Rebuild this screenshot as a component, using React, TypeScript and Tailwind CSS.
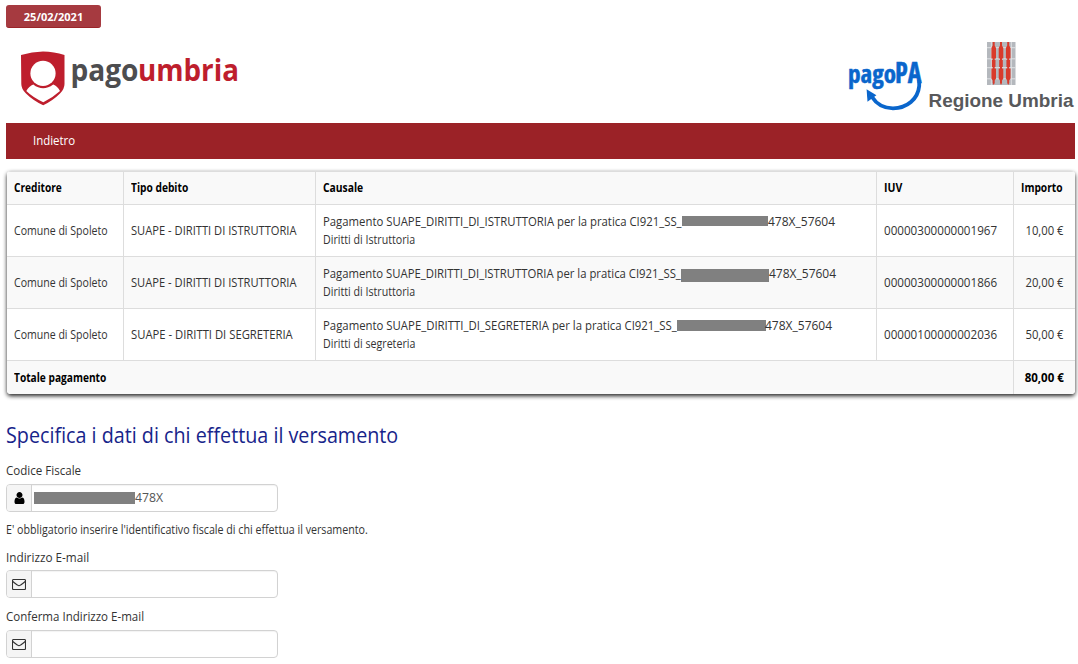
import type { ReactNode } from "react";

type Row = {
  tipo: string;
  tipoClass: string;
  prefix: string;
  prefixClass: string;
  prefixScale: string;
  barClass: string;
  suffixClass: string;
  detail: string;
  iuv: string;
  importo: string;
};

const rows: Row[] = [
  {
    tipo: "SUAPE - DIRITTI DI ISTRUTTORIA",
    tipoClass: "scale-x-[0.929]",
    prefix: "Pagamento SUAPE_DIRITTI_DI_ISTRUTTORIA per la pratica CI921_SS_",
    prefixClass: "w-[359px]",
    prefixScale: "scale-x-[0.945]",
    barClass: "mt-[3px] h-[10px] w-[86px]",
    suffixClass: "",
    detail: "Diritti di Istruttoria",
    iuv: "00000300000001967",
    importo: "10,00 €",
  },
  {
    tipo: "SUAPE - DIRITTI DI ISTRUTTORIA",
    tipoClass: "scale-x-[0.929]",
    prefix: "Pagamento SUAPE_DIRITTI_DI_ISTRUTTORIA per la pratica CI921_SS_",
    prefixClass: "w-[358px]",
    prefixScale: "scale-x-[0.943]",
    barClass: "mt-[4px] h-[13px] w-[88px]",
    suffixClass: "",
    detail: "Diritti di Istruttoria",
    iuv: "00000300000001866",
    importo: "20,00 €",
  },
  {
    tipo: "SUAPE - DIRITTI DI SEGRETERIA",
    tipoClass: "scale-x-[0.939]",
    prefix: "Pagamento SUAPE_DIRITTI_DI_SEGRETERIA per la pratica CI921_SS_",
    prefixClass: "w-[354px]",
    prefixScale: "scale-x-[0.947]",
    barClass: "mt-[3px] h-[11px] w-[89px]",
    suffixClass: "-ml-px",
    detail: "Diritti di segreteria",
    iuv: "00000100000002036",
    importo: "50,00 €",
  },
];

/* Text set narrower than the face's own width; `className` carries the horizontal scale. */
function T({ className, children }: { className: string; children: ReactNode }) {
  return <span className={`inline-block origin-left whitespace-nowrap ${className}`}>{children}</span>;
}

function PagoUmbriaLogo() {
  return (
    <svg width="224" height="70" viewBox="20 43 224 70" role="img" aria-label="pagoumbria">
      <path d="M21 55 Q32 51.5 43 51.5 Q54 51.5 64.5 55 V84 Q64.5 89 60 93.5 Q53 100.5 43.2 105.3 Q33 100.5 26 93.5 Q21.300 89 21.300 84 Z" fill="#be1e2d" />
      <path d="M33.300 84.500 Q29 86 26.300 91 Q33 97.500 43.300 102.200 Q53 97.500 60 91 Q57.500 86 53.200 84.500 Q43 92 33.300 84.500 Z" fill="#fff" />
      <circle cx="43" cy="73.400" r="12.600" fill="#fff" />
      <text x="70.500" y="80.800" fontSize="30" fontWeight="700" fill="#4d4d4f" textLength="68" lengthAdjust="spacingAndGlyphs" className="font-['Open_Sans',sans-serif]">pago</text>
      <text x="138" y="80.800" fontSize="30" fontWeight="700" fill="#be1e2d" textLength="101" lengthAdjust="spacingAndGlyphs" className="font-['Open_Sans',sans-serif]">umbria</text>
    </svg>
  );
}

function PagoPaLogo() {
  return (
    <svg width="80" height="70" viewBox="847 46 80 70" role="img" aria-label="pagoPA">
      <text x="848" y="83" fontSize="25" fontWeight="700" fill="#0a66cc" stroke="#0a66cc" strokeWidth="0.500" textLength="48" lengthAdjust="spacingAndGlyphs" className="font-['Open_Sans',sans-serif] [font-stretch:75%]">pago</text>
      <text x="895" y="83" fontSize="28" fontWeight="700" fill="#0a66cc" stroke="#0a66cc" strokeWidth="0.500" textLength="26.500" lengthAdjust="spacingAndGlyphs" className="font-['Open_Sans',sans-serif] [font-stretch:75%]">PA</text>
      <path d="M919.200 80 V86 C918 99 907 108.300 893 108.300 C883.500 108.300 876.500 104 872 97" fill="none" stroke="#0a66cc" strokeWidth="3.800" />
      <path d="M866.600 89.300 L876.400 95.200 L867.500 101.800 Z" fill="#0a66cc" />
    </svg>
  );
}

function RegioneUmbriaLogo() {
  return (
    <svg width="148" height="74" viewBox="928 40 148 74" role="img" aria-label="Regione Umbria">
      <rect x="987" y="42" width="28.500" height="43" fill="#b4b8bd" />
      <path d="M987 47.700h28.500M987 58.800h28.500M987 67.700h28.500M987 78.800h28.500M991.300 42v43M1011.300 42v43" stroke="#e3e5e8" strokeWidth="0.900" />
      {[993.7, 1001, 1008.2].map((x) => (
        <g key={x} transform={`translate(${x} 42)`}>
          <path d="M-1 0H1V3.500L2.300 6V16.500H1V18H1.800V25H1V26.500H2.300V36.500L1 38.500V41L0 43L-1 41V38.500L-2.300 36.500V26.500H-1V25H-1.800V18H-1V16.500H-2.300V6L-1 3.500Z" fill="#d93a2b" />
        </g>
      ))}
      <text x="928.500" y="107" fontSize="18.500" fontWeight="700" fill="#58595b" textLength="145" lengthAdjust="spacingAndGlyphs" className="font-['Liberation_Sans',Arial,sans-serif]">Regione Umbria</text>
    </svg>
  );
}

function UserIcon() {
  return (
    <svg width="11" height="12" viewBox="0 128 1280 1536" fill="#000">
      <path d="M1280 1399q0 109-62.500 187t-150.500 78h-854q-88 0-150.500-78t-62.500-187q0-85 8.500-160.500t31.500-152 58.500-131 94-89 134.500-34.500q131 128 313 128t313-128q76 0 134.500 34.500t94 89 58.500 131 31.500 152 8.500 160.500zm-256-887q0 159-112.500 271.500t-271.500 112.500-271.500-112.500-112.500-271.500 112.500-271.500 271.500-112.500 271.500 112.500 112.500 271.500z" />
    </svg>
  );
}

function MailIcon() {
  return (
    <svg width="14" height="12" viewBox="0 0 14 12" fill="none" stroke="#333" strokeWidth="1.1">
      <rect x="0.500" y="1.500" width="13" height="10" rx="1" />
      <path d="M0.800 3.300 C2 4.700 4.300 6.100 5.600 7.200 Q7 8.400 8.400 7.200 C9.700 6.100 12 4.700 13.200 3.300" />
    </svg>
  );
}

function Field({ icon, children }: { icon: ReactNode; children?: ReactNode }) {
  return (
    <div className="flex h-[28px] w-[272px] overflow-hidden rounded-[4px] border border-[#d2d2d2] bg-white shadow-[inset_0_1px_1px_rgba(0,0,0,0.05)]">
      <div className="flex w-[25px] shrink-0 items-center justify-center border-r border-[#d2d2d2] bg-[#f5f5f5]">{icon}</div>
      <div className="flex flex-1 items-center pl-[2px] text-[13px] text-[#555]">{children}</div>
    </div>
  );
}

const cell = "border-t border-l border-[#ddd] py-0 pl-[7px] align-middle";
const firstCell = "border-t border-[#ddd] py-0 pl-[7px] align-middle";

export default function App() {
  return (
    <div className="flex h-[664px] w-[1078px] flex-col overflow-hidden bg-white font-['Open_Sans',sans-serif] text-[#333]">
      <header className="flex h-[123px] shrink-0 flex-col pl-[6px]">
        <div className="mt-[5px] flex h-[23px] w-[95px] shrink-0 items-center justify-center rounded-[3px] border-b border-[#9b2429] bg-[#a63a40] text-[11px] leading-none font-bold text-white">
          25/02/2021
        </div>
        <div className="flex justify-between">
          <div className="mt-[15px] ml-[14px]">
            <PagoUmbriaLogo />
          </div>
          <div className="mr-[2px] flex">
            <div className="mt-[18px] mr-px">
              <PagoPaLogo />
            </div>
            <div className="mt-[12px]">
              <RegioneUmbriaLogo />
            </div>
          </div>
        </div>
      </header>

      <nav className="ml-[6px] flex h-[36px] w-[1069px] shrink-0 items-center bg-[#9b2227] pl-[27px] text-[13px] text-white">
        <T className="scale-x-[0.88]">Indietro</T>
      </nav>

      <div className="mt-[12px] ml-[7px] h-[223px] w-[1068px] shrink-0 overflow-hidden rounded-[4px] shadow-[0_2px_4px_#222]">
        <table className="w-full table-fixed border-separate border-spacing-0 bg-white text-left text-[12px] leading-[18px]">
          <colgroup>
            <col className="w-[116px]" />
            <col className="w-[192px]" />
            <col className="w-[561px]" />
            <col className="w-[137px]" />
            <col />
          </colgroup>
          <thead className="bg-[#f9f9f9] font-bold text-black">
            <tr className="h-[33px]">
              <th className={firstCell}><T className="scale-x-[0.845]">Creditore</T></th>
              <th className={cell}><T className="scale-x-[0.85]">Tipo debito</T></th>
              <th className={cell}><T className="scale-x-[0.86]">Causale</T></th>
              <th className={cell}><T className="scale-x-[0.88]">IUV</T></th>
              <th className={cell}><T className="scale-x-[0.85]">Importo</T></th>
            </tr>
          </thead>
          <tbody>
            {rows.map((r) => (
              <tr key={r.iuv} className="h-[52px] even:bg-[#f9f9f9]">
                <td className={firstCell}><T className="scale-x-[0.88]">Comune di Spoleto</T></td>
                <td className={cell}><T className={r.tipoClass}>{r.tipo}</T></td>
                <td className={cell}>
                  <div className="flex h-[18px] whitespace-nowrap">
                    <span className={`shrink-0 ${r.prefixClass}`}>
                      <T className={r.prefixScale}>{r.prefix}</T>
                    </span>
                    <span className={`shrink-0 bg-[#808080] ${r.barClass}`} />
                    <span className={r.suffixClass}>478X_57604</span>
                  </div>
                  <div className="h-[18px]"><T className="scale-x-[0.887]">{r.detail}</T></div>
                </td>
                <td className={cell}><T className="scale-x-[0.97]">{r.iuv}</T></td>
                <td className={`${cell} pr-[11px] text-right`}><T className="origin-right scale-x-[0.94]">{r.importo}</T></td>
              </tr>
            ))}
          </tbody>
          <tfoot className="bg-[#f9f9f9] font-bold text-black">
            <tr className="h-[34px]">
              <td colSpan={4} className={firstCell}><T className="scale-x-[0.847]">Totale pagamento</T></td>
              <td className={`${cell} pr-[11px] text-right`}><T className="origin-right scale-x-[0.96]">80,00 €</T></td>
            </tr>
          </tfoot>
        </table>
      </div>

      <main className="flex flex-col pl-[6px]">
        <h1 className="mt-[25px] h-[30px] text-[22px] leading-[30px] font-normal text-[#17248a]">
          <T className="scale-x-[0.897]">Specifica i dati di chi effettua il versamento</T>
        </h1>
        <label className="mt-[12px] h-[18px] text-[13px] leading-[18px]">
          <T className="scale-x-[0.89]">Codice Fiscale</T>
        </label>
        <div className="mt-[5px]">
          <Field icon={<UserIcon />}>
            <span className="h-[12px] w-[101px] bg-[#808080]" />
            <T className="scale-x-[0.94]">478X</T>
          </Field>
        </div>
        <p className="mt-[9px] h-[18px] text-[12px] leading-[18px]">
          <T className="scale-x-[0.89]">E' obbligatorio inserire l'identificativo fiscale di chi effettua il versamento.</T>
        </p>
        <label className="mt-[9px] h-[18px] text-[13px] leading-[18px]">
          <T className="scale-x-[0.903]">Indirizzo E-mail</T>
        </label>
        <div className="mt-[4px]">
          <Field icon={<MailIcon />} />
        </div>
        <label className="mt-[9px] h-[18px] text-[13px] leading-[18px]">
          <T className="scale-x-[0.887]">Conferma Indirizzo E-mail</T>
        </label>
        <div className="mt-[5px]">
          <Field icon={<MailIcon />} />
        </div>
      </main>
    </div>
  );
}
